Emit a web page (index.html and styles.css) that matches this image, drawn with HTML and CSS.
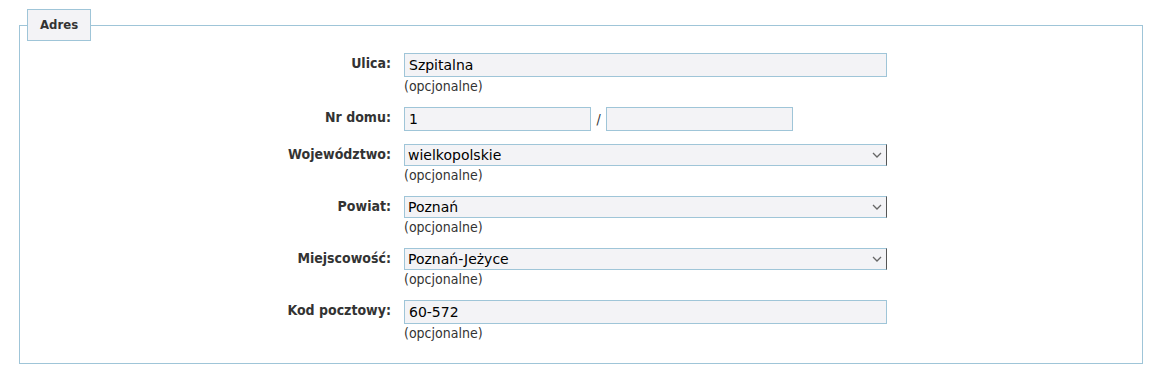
FILE: index.html
```
<!DOCTYPE html>
<html lang="pl">
<head>
    <meta charset="UTF-8">
    <title>Adres</title>
    <link rel="stylesheet" href="styles.css">
</head>
<body>
    <fieldset class="adres">
        <legend>Adres</legend>

        <div class="pole">
            <label for="ulica">Ulica:</label>
            <div class="wartosc">
                <input type="text" id="ulica" class="szeroki" value="Szpitalna">
                <span class="uwaga">(opcjonalne)</span>
            </div>
        </div>

        <div class="pole">
            <label for="nr_domu">Nr domu:</label>
            <div class="wartosc">
                <div class="numery">
                    <input type="text" id="nr_domu" class="waski" value="1">
                    <span class="kreska">/</span>
                    <input type="text" id="nr_lokalu" class="waski" value="">
                </div>
            </div>
        </div>

        <div class="pole">
            <label for="wojewodztwo">Województwo:</label>
            <div class="wartosc">
                <span class="wybor">
                    <select id="wojewodztwo" class="szeroki">
                        <option>wielkopolskie</option>
                    </select>
                    <svg class="strzalka" width="10" height="6" viewBox="0 0 10 6"><path d="M1 1l4 4 4-4" fill="none" stroke="#666" stroke-width="1.3"/></svg>
                </span>
                <span class="uwaga">(opcjonalne)</span>
            </div>
        </div>

        <div class="pole">
            <label for="powiat">Powiat:</label>
            <div class="wartosc">
                <span class="wybor">
                    <select id="powiat" class="szeroki">
                        <option>Poznań</option>
                    </select>
                    <svg class="strzalka" width="10" height="6" viewBox="0 0 10 6"><path d="M1 1l4 4 4-4" fill="none" stroke="#666" stroke-width="1.3"/></svg>
                </span>
                <span class="uwaga">(opcjonalne)</span>
            </div>
        </div>

        <div class="pole">
            <label for="miejscowosc">Miejscowość:</label>
            <div class="wartosc">
                <span class="wybor">
                    <select id="miejscowosc" class="szeroki">
                        <option>Poznań-Jeżyce</option>
                    </select>
                    <svg class="strzalka" width="10" height="6" viewBox="0 0 10 6"><path d="M1 1l4 4 4-4" fill="none" stroke="#666" stroke-width="1.3"/></svg>
                </span>
                <span class="uwaga">(opcjonalne)</span>
            </div>
        </div>

        <div class="pole">
            <label for="kod">Kod pocztowy:</label>
            <div class="wartosc">
                <input type="text" id="kod" class="szeroki" value="60-572">
                <span class="uwaga">(opcjonalne)</span>
            </div>
        </div>
    </fieldset>
</body>
</html>
```

FILE: styles.css
```
/* Strona */
body {
    margin: 9px 18px 9px 19px;
    font-family: Tahoma, "DejaVu Sans Condensed", "DejaVu Sans", sans-serif;
    font-size: 14px;
    color: #333;
    background: #fff;
}

/* Ramka sekcji */
.adres {
    margin: 0;
    padding: 12px 0 22px 0;
    border: 1px solid #9fc5d8;
    min-width: 0;
}

.adres legend {
    margin-left: 7px;
    padding: 0 12px;
    height: 30px;
    line-height: 30px;
    background: #f3f3f6;
    border: 1px solid #9fc5d8;
    font-size: 13px;
    font-weight: bold;
    color: #333;
}

/* Wiersz formularza */
.pole {
    display: grid;
    grid-template-columns: 371px 1fr;
    column-gap: 13px;
    margin-bottom: 13px;
}

.pole:last-child {
    margin-bottom: 0;
}

.pole label {
    text-align: right;
    font-weight: bold;
    line-height: 17px;
    padding-top: 2px;
}

.wartosc {
    display: flex;
    flex-direction: column;
    align-items: flex-start;
}

/* Pola */
input,
select {
    font-family: "DejaVu Sans", Verdana, sans-serif;
    font-size: 14px;
    color: #000;
    background: #f3f3f6;
    border: 1px solid #9fc5d8;
    box-sizing: border-box;
    margin: 0;
}

input {
    height: 24px;
    padding: 0 4px;
}

select {
    appearance: none;
    -webkit-appearance: none;
    height: 22px;
    padding: 0 3px;
    border-right-color: #555;
    border-radius: 0;
}

.wybor {
    position: relative;
    display: block;
}

.strzalka {
    position: absolute;
    right: 5px;
    top: 8px;
    pointer-events: none;
}

.szeroki {
    width: 483px;
}

.waski {
    width: 187px;
}

.numery {
    display: flex;
    align-items: center;
}

.kreska {
    width: 15px;
    text-align: center;
    color: #333;
}

.uwaga {
    color: #333;
    margin-top: 1px;
    line-height: 16px;
}
```
